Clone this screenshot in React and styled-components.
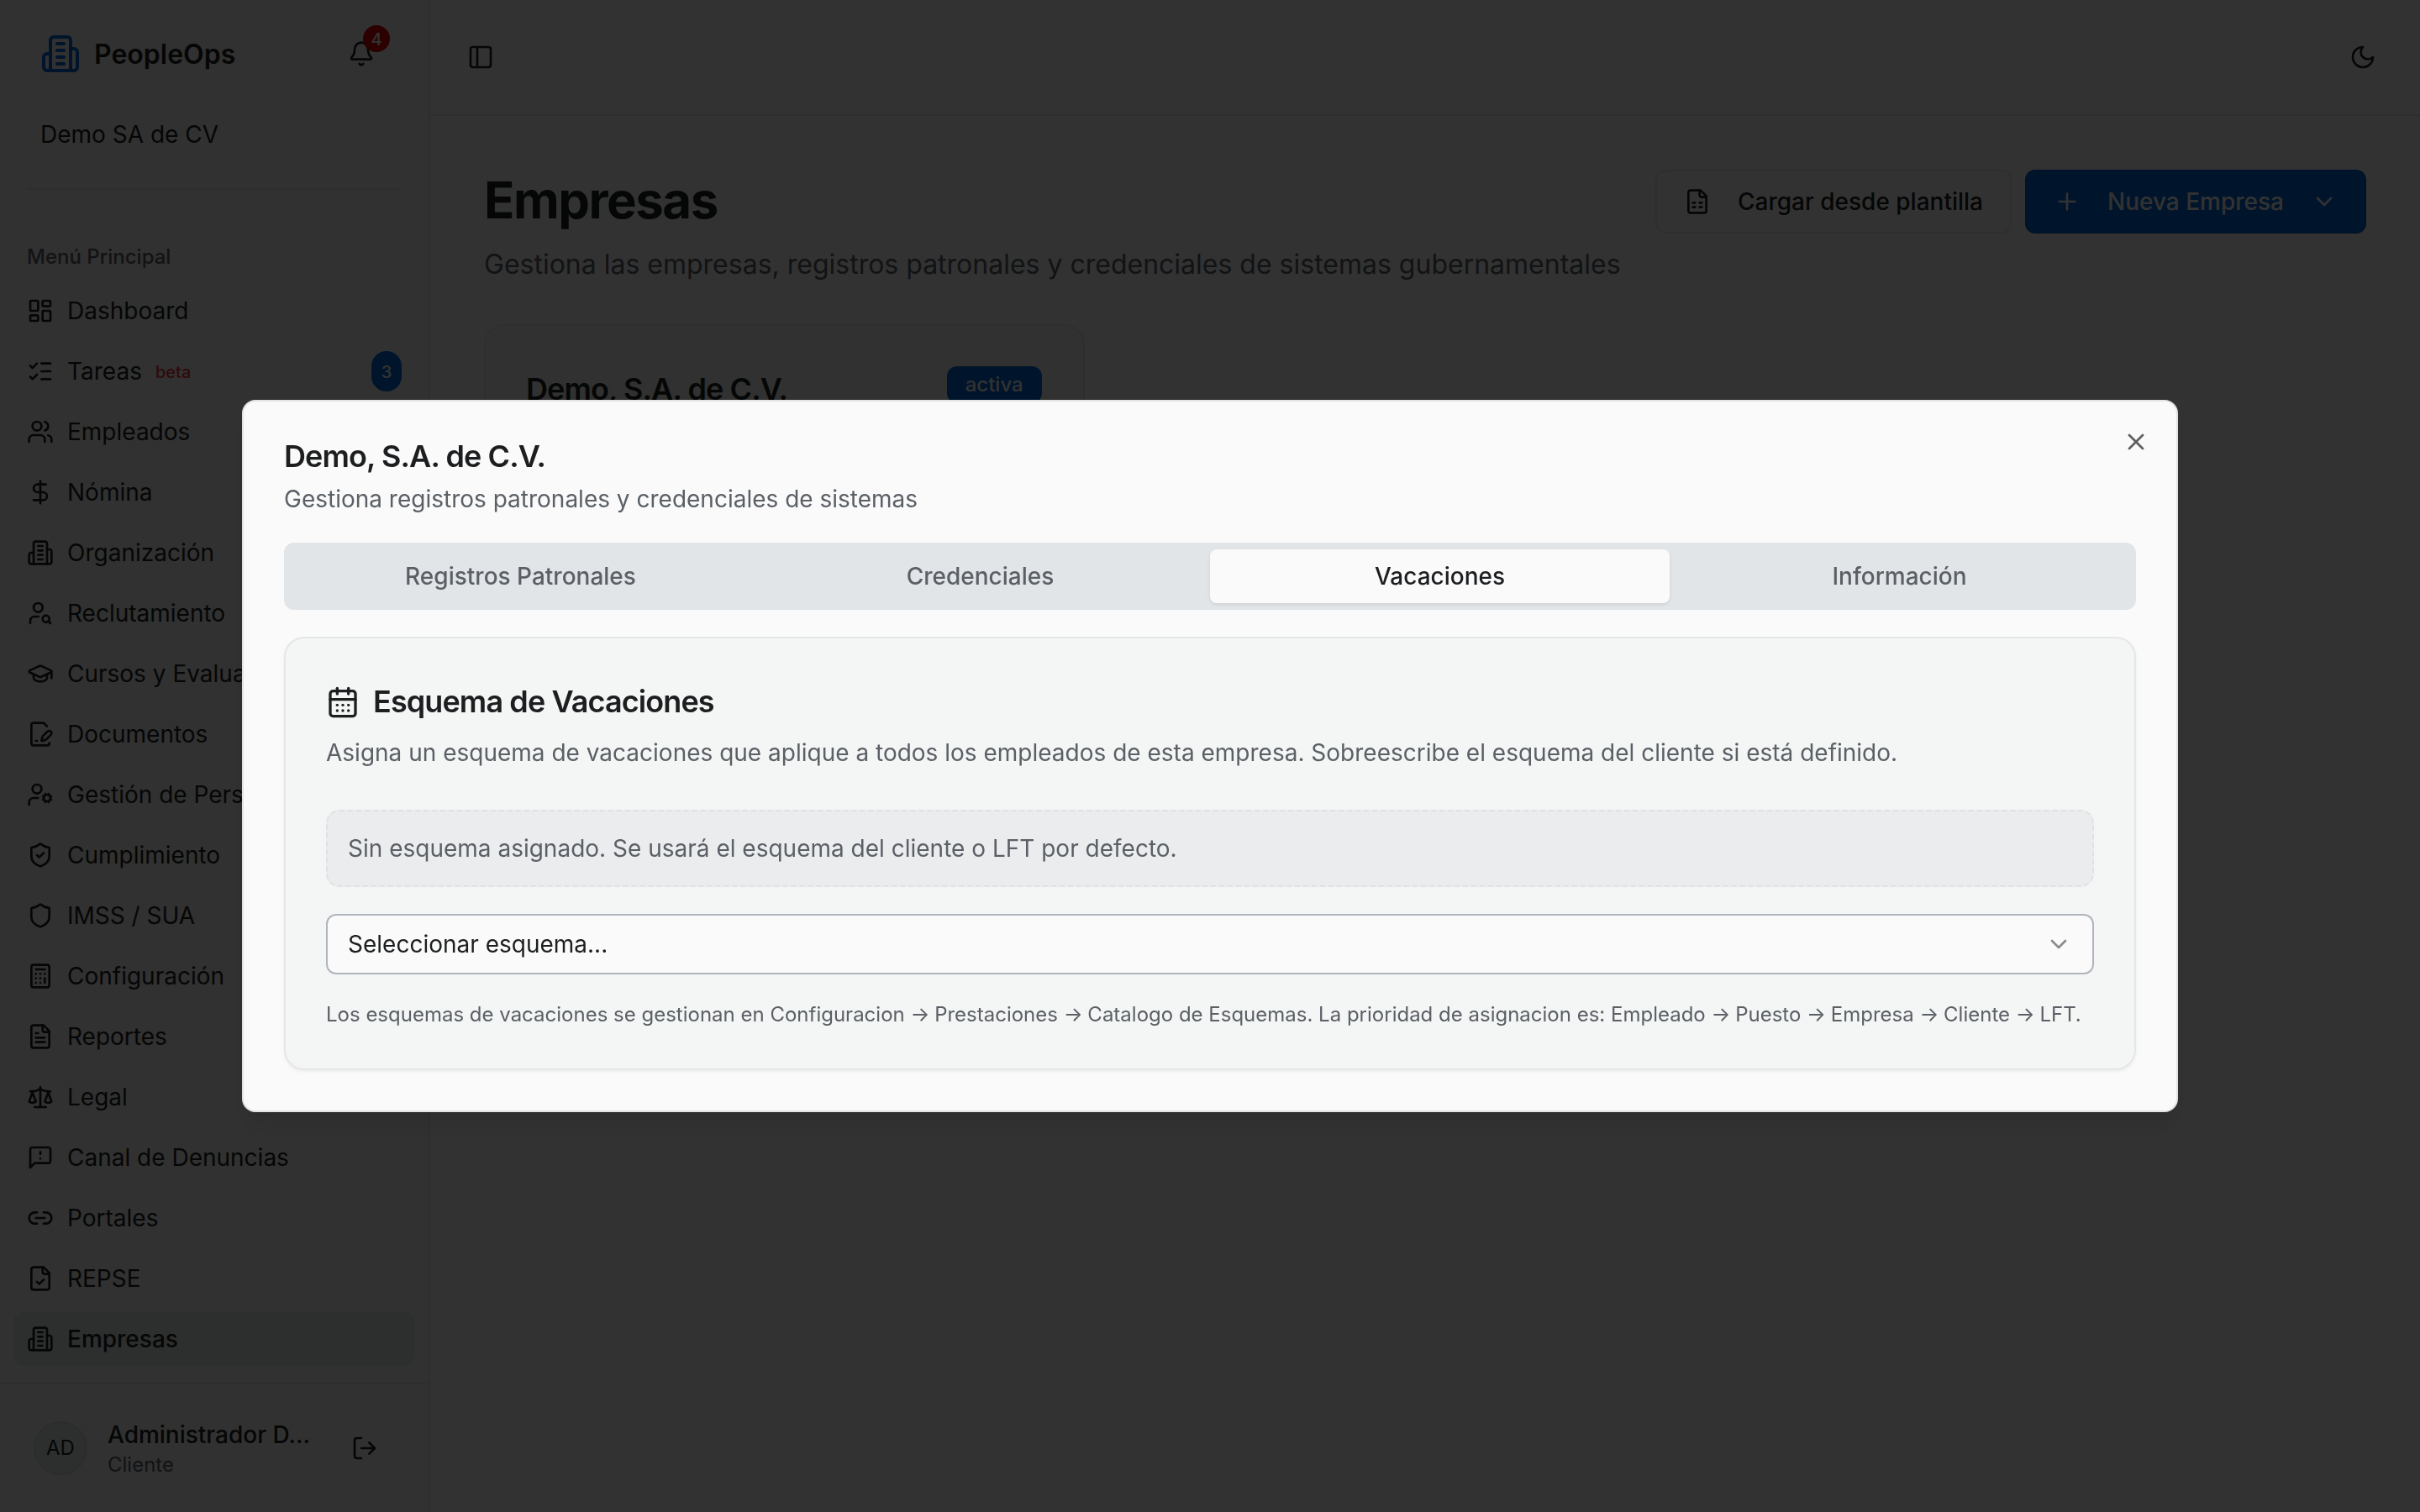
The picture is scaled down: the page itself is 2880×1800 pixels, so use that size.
import styled, { createGlobalStyle, css } from "styled-components";
import {
    ListChecks,
    Users,
    DollarSign,
    UserSearch,
    GraduationCap,
    UserCog,
    ShieldCheck,
    Shield,
    Calculator,
    Scale,
    Link2,
    LogOut,
    PanelLeft,
    CalendarDays,
    LayoutDashboard,
    Bell,
    Plus,
    ChevronDown,
    X,
} from "lucide-react";

function Icone({ size = 32, children }) {
    return (
        <svg width={size} height={size} viewBox="0 0 24 24" fill="none" stroke="currentColor" strokeWidth="2" strokeLinecap="round" strokeLinejoin="round">
            {children}
        </svg>
    );
}

function Edificio({ size }) {
    return (
        <Icone size={size}>
            <path d="M6 22V4a2 2 0 0 1 2-2h8a2 2 0 0 1 2 2v18Z" />
            <path d="M6 12H4a2 2 0 0 0-2 2v6a2 2 0 0 0 2 2h2" />
            <path d="M18 9h2a2 2 0 0 1 2 2v9a2 2 0 0 1-2 2h-2" />
            <path d="M10 6h4M10 10h4M10 14h4M10 18h4" />
        </Icone>
    );
}

function Archivo({ size, d }) {
    return (
        <Icone size={size}>
            <path d="M15 2H6a2 2 0 0 0-2 2v16a2 2 0 0 0 2 2h12a2 2 0 0 0 2-2V7Z" />
            <path d="M14 2v4a2 2 0 0 0 2 2h4" />
            <path d={d} />
        </Icone>
    );
}

const ArchivoTexto = (props) => <Archivo {...props} d="M10 9H8M16 13H8M16 17H8" />;
const ArchivoCheck = (props) => <Archivo {...props} d="m9 15 2 2 4-4" />;
const ArchivoHoja = (props) => <Archivo {...props} d="M8 13h2M14 13h2M8 17h2M14 17h2" />;

function ArchivoFirma({ size }) {
    return (
        <Icone size={size}>
            <path d="m18 5-2.414-2.414A2 2 0 0 0 14.172 2H6a2 2 0 0 0-2 2v16a2 2 0 0 0 2 2h12a2 2 0 0 0 2-2" />
            <path d="M21.378 12.626a1 1 0 0 0-3.004-3.004l-4.01 4.012a2 2 0 0 0-.506.854l-.837 2.87a.5.5 0 0 0 .62.62l2.87-.837a2 2 0 0 0 .854-.506z" />
            <path d="M8 18h1" />
        </Icone>
    );
}

function Denuncia({ size }) {
    return (
        <Icone size={size}>
            <path d="M21 15a2 2 0 0 1-2 2H7l-4 4V5a2 2 0 0 1 2-2h14a2 2 0 0 1 2 2z" />
            <path d="M12 7v2M12 13h.01" />
        </Icone>
    );
}

function Luna({ size }) {
    return (
        <Icone size={size}>
            <path d="M12 3a6 6 0 0 0 9 9 9 9 0 1 1-9-9Z" />
        </Icone>
    );
}

const menu = [
    { nombre: "Dashboard", icono: LayoutDashboard },
    { nombre: "Tareas", icono: ListChecks, beta: true, total: 3 },
    { nombre: "Empleados", icono: Users },
    { nombre: "Nómina", icono: DollarSign },
    { nombre: "Organización", icono: Edificio },
    { nombre: "Reclutamiento", icono: UserSearch },
    { nombre: "Cursos y Evaluaciones", icono: GraduationCap },
    { nombre: "Documentos", icono: ArchivoFirma },
    { nombre: "Gestión de Personal", icono: UserCog },
    { nombre: "Cumplimiento", icono: ShieldCheck },
    { nombre: "IMSS / SUA", icono: Shield },
    { nombre: "Configuración", icono: Calculator },
    { nombre: "Reportes", icono: ArchivoTexto },
    { nombre: "Legal", icono: Scale },
    { nombre: "Canal de Denuncias", icono: Denuncia },
    { nombre: "Portales", icono: Link2 },
    { nombre: "REPSE", icono: ArchivoCheck },
    { nombre: "Empresas", icono: Edificio, activo: true },
];

const tabs = ["Registros Patronales", "Credenciales", "Vacaciones", "Información"];

function Sidebar() {
    return (
        <Lateral>
            <LateralTop>
                <Marca>
                    <LogoBox><Edificio size={48} /></LogoBox>
                    <span>PeopleOps</span>
                </Marca>
                <Campana>
                    <Bell size={32} />
                    <Alerta>4</Alerta>
                </Campana>
            </LateralTop>
            <Cliente>Demo SA de CV</Cliente>
            <Separador />
            <MenuLabel>Menú Principal</MenuLabel>
            <Menu>
                {menu.map(({ nombre, icono: Icon, beta, total, activo }) => (
                    <MenuItem key={nombre} $activo={activo}>
                        <Icon size={32} />
                        <span>{nombre}</span>
                        {beta && <Beta>beta</Beta>}
                        {total && <Total>{total}</Total>}
                    </MenuItem>
                ))}
            </Menu>
            <Usuario>
                <Avatar>AD</Avatar>
                <UsuarioInfo>
                    <UsuarioNombre>Administrador D…</UsuarioNombre>
                    <UsuarioRol>Cliente</UsuarioRol>
                </UsuarioInfo>
                <BotonIcono $size={72}><LogOut size={32} /></BotonIcono>
            </Usuario>
        </Lateral>
    );
}

function Empresas() {
    return (
        <Contenido>
            <Barra>
                <BotonIcono $size={56}><PanelLeft size={32} /></BotonIcono>
                <BotonIcono $size={72}><Luna size={32} /></BotonIcono>
            </Barra>
            <Pagina>
                <Encabezado>
                    <div>
                        <Titulo>Empresas</Titulo>
                        <Subtitulo>Gestiona las empresas, registros patronales y credenciales de sistemas gubernamentales</Subtitulo>
                    </div>
                    <Acciones>
                        <Boton>
                            <ArchivoHoja size={32} />
                            Cargar desde plantilla
                        </Boton>
                        <Boton $primario>
                            <Plus size={32} />
                            Nueva Empresa
                            <ChevronDown size={32} />
                        </Boton>
                    </Acciones>
                </Encabezado>
                <Grid>
                    <Empresa>
                        <EmpresaNombre>Demo, S.A. de C.V.</EmpresaNombre>
                        <Estado>activa</Estado>
                    </Empresa>
                </Grid>
            </Pagina>
        </Contenido>
    );
}

function EmpresaModal() {
    return (
        <Fondo>
            <Modal>
                <Cerrar><X size={32} /></Cerrar>
                <ModalTitulo>Demo, S.A. de C.V.</ModalTitulo>
                <ModalTexto>Gestiona registros patronales y credenciales de sistemas</ModalTexto>
                <Tabs>
                    {tabs.map((tab) => (
                        <Tab key={tab} $activo={tab === "Vacaciones"}>{tab}</Tab>
                    ))}
                </Tabs>
                <Panel>
                    <PanelTitulo>
                        <CalendarDays size={40} />
                        <span>Esquema de Vacaciones</span>
                    </PanelTitulo>
                    <PanelTexto>Asigna un esquema de vacaciones que aplique a todos los empleados de esta empresa. Sobreescribe el esquema del cliente si está definido.</PanelTexto>
                    <Aviso>Sin esquema asignado. Se usará el esquema del cliente o LFT por defecto.</Aviso>
                    <Select>
                        Seleccionar esquema...
                        <ChevronDown size={32} />
                    </Select>
                    <Ayuda>
                        Los esquemas de vacaciones se gestionan en Configuracion <Flecha /> Prestaciones <Flecha /> Catalogo de Esquemas. La prioridad de asignacion es: Empleado <Flecha /> Puesto <Flecha /> Empresa <Flecha /> Cliente <Flecha /> LFT.
                    </Ayuda>
                </Panel>
            </Modal>
        </Fondo>
    );
}

const Flecha = () => <FlechaTexto>→</FlechaTexto>;

export default function App() {
    return (
        <>
            <GlobalStyle />
            <Layout>
                <Sidebar />
                <Empresas />
            </Layout>
            <EmpresaModal />
        </>
    );
}

const GlobalStyle = createGlobalStyle`
    * {
        box-sizing: border-box;
        margin: 0;
        padding: 0;
    }
    body {
        font-family: Inter, "Liberation Sans", sans-serif;
        font-size: 28px;
        line-height: 40px;
        color: #1c1e20;
        background: #fafafa;
        overflow: hidden;
        -webkit-font-smoothing: antialiased;
    }
    svg {
        flex-shrink: 0;
    }
`

const Layout = styled.div`
    display: flex;
    width: 2880px;
    height: 1800px;
`

const Lateral = styled.aside`
    display: flex;
    flex-direction: column;
    width: 512px;
    height: 100%;
    background: #f2f2f2;
    border-right: 2px solid #e2e4e4;
`

const LateralTop = styled.div`
    display: flex;
    align-items: center;
    justify-content: space-between;
    height: 72px;
    margin-top: 28px;
    padding: 0 44px 0 48px;
`

const Marca = styled.div`
    display: flex;
    align-items: center;
    gap: 16px;
    font-size: 32px;
    font-weight: 600;
    span {
        padding-top: 2px;
    }
`

const LogoBox = styled.div`
    display: flex;
    color: #0066d6;
`

const Campana = styled.div`
    position: relative;
    display: flex;
    align-items: center;
    justify-content: center;
    width: 72px;
    height: 72px;
`

const Alerta = styled.span`
    position: absolute;
    top: 2px;
    right: 2px;
    width: 32px;
    height: 32px;
    border-radius: 50%;
    background: #dc0000;
    color: #fafafa;
    font-size: 20px;
    font-weight: 500;
    line-height: 34px;
    text-align: center;
`

const Cliente = styled.div`
    margin: 40px 48px 0;
`

const Separador = styled.div`
    height: 2px;
    margin: 44px 32px 0;
    background: #e4e6e6;
`

const MenuLabel = styled.div`
    margin: 48px 32px 0;
    height: 64px;
    line-height: 64px;
    font-size: 24px;
    font-weight: 500;
    color: #5b6066;
`

const Menu = styled.nav`
    display: flex;
    flex-direction: column;
    gap: 8px;
    padding: 0 16px;
`

const MenuItem = styled.div`
    display: flex;
    align-items: center;
    gap: 16px;
    height: 64px;
    padding: 0 16px;
    border-radius: 12px;
    white-space: nowrap;
    ${({ $activo }) => $activo && css`
        background: #dfe5e3;
        font-weight: 500;
    `}
`

const Beta = styled.span`
    padding-top: 2px;
    font-size: 20px;
    font-weight: 500;
    color: #ea3434;
`

const Total = styled.span`
    width: 36px;
    height: 48px;
    margin-left: auto;
    border-radius: 18px;
    background: #0066d6;
    color: #fafafa;
    font-size: 20px;
    font-weight: 500;
    line-height: 50px;
    text-align: center;
`

const Usuario = styled.div`
    display: flex;
    align-items: center;
    gap: 24px;
    height: 154px;
    margin-top: auto;
    padding: 0 40px;
    border-top: 2px solid #e2e4e4;
`

const Avatar = styled.div`
    display: flex;
    align-items: center;
    justify-content: center;
    width: 64px;
    height: 64px;
    border: 2px solid #d6dbda;
    border-radius: 50%;
    background: #dfe5e3;
    font-size: 24px;
`

const UsuarioInfo = styled.div`
    flex: 1;
    min-width: 0;
`

const UsuarioNombre = styled.div`
    white-space: nowrap;
    font-weight: 500;
`

const UsuarioRol = styled.div`
    font-size: 24px;
    line-height: 32px;
    color: #5b6066;
`

const BotonIcono = styled.button`
    display: flex;
    align-items: center;
    justify-content: center;
    width: ${({ $size }) => $size}px;
    height: ${({ $size }) => $size}px;
    border: none;
    background: none;
    color: inherit;
`

const Contenido = styled.main`
    flex: 1;
`

const Barra = styled.header`
    display: flex;
    align-items: center;
    justify-content: space-between;
    height: 138px;
    padding: 0 32px;
    border-bottom: 2px solid #e2e4e4;
`

const Pagina = styled.div`
    padding: 64px;
`

const Encabezado = styled.div`
    display: flex;
    align-items: flex-start;
    justify-content: space-between;
`

const Titulo = styled.h1`
    font-size: 60px;
    font-weight: 700;
    line-height: 72px;
    letter-spacing: -0.025em;
`

const Subtitulo = styled.p`
    margin-top: 16px;
    font-size: 32px;
    line-height: 50px;
    color: #5b6066;
`

const Acciones = styled.div`
    display: flex;
    gap: 16px;
`

const Boton = styled.button`
    display: flex;
    align-items: center;
    gap: 32px;
    height: 76px;
    padding: 0 32px;
    border: 2px solid ${({ $primario }) => ($primario ? "#005fc8" : "#e5e7e7")};
    border-radius: 12px;
    background: ${({ $primario }) => ($primario ? "#0066d6" : "#fafafa")};
    color: ${({ $primario }) => ($primario ? "#fafafa" : "#1c1e20")};
    font: inherit;
    font-weight: 500;
    white-space: nowrap;
`

const Grid = styled.div`
    display: grid;
    grid-template-columns: repeat(3, 1fr);
    gap: 48px;
    margin-top: 46px;
`

const Empresa = styled.div`
    display: flex;
    align-items: flex-start;
    justify-content: space-between;
    height: 480px;
    padding: 48px;
    border: 2px solid #e5e7e7;
    border-radius: 24px;
    background: #f4f6f5;
`

const EmpresaNombre = styled.h3`
    font-size: 36px;
    font-weight: 600;
    line-height: 54px;
    letter-spacing: -0.025em;
`

const Estado = styled.span`
    margin-right: 1px;
    padding: 6px 22px;
    border-radius: 12px;
    background: #0066d6;
    color: #fafafa;
    font-size: 24px;
    font-weight: 500;
    line-height: 32px;
`

const Fondo = styled.div`
    position: fixed;
    inset: 0;
    display: flex;
    align-items: center;
    justify-content: center;
    background: rgba(0, 0, 0, 0.8);
`

const Modal = styled.div`
    position: relative;
    width: 2304px;
    padding: 48px;
    border: 2px solid #e2e4e4;
    border-radius: 16px;
    background: #fafafa;
    box-shadow: 0 20px 30px -6px rgba(0, 0, 0, 0.1), 0 8px 12px -8px rgba(0, 0, 0, 0.1);
`

const Cerrar = styled.button`
    position: absolute;
    top: 32px;
    right: 32px;
    display: flex;
    border: none;
    background: none;
    color: inherit;
    opacity: 0.7;
`

const ModalTitulo = styled.h2`
    font-size: 36px;
    font-weight: 600;
    line-height: 34px;
    letter-spacing: -0.025em;
`

const ModalTexto = styled.p`
    margin-top: 14px;
    color: #5b6066;
`

const Tabs = styled.div`
    display: grid;
    grid-template-columns: repeat(4, 1fr);
    margin-top: 32px;
    padding: 8px;
    border-radius: 12px;
    background: #e1e5e8;
`

const Tab = styled.div`
    height: 64px;
    border-radius: 8px;
    font-weight: 500;
    line-height: 64px;
    text-align: center;
    color: #5b6066;
    ${({ $activo }) => $activo && css`
        background: #fafafa;
        color: #1c1e20;
        box-shadow: 0 2px 4px rgba(0, 0, 0, 0.08);
    `}
`

const Panel = styled.section`
    margin-top: 32px;
    padding: 48px;
    border: 2px solid #e5e7e7;
    border-radius: 24px;
    background: #f4f6f5;
    box-shadow: 0 2px 4px rgba(0, 0, 0, 0.05);
`

const PanelTitulo = styled.h3`
    display: flex;
    align-items: center;
    gap: 16px;
    font-size: 36px;
    font-weight: 600;
    line-height: 54px;
    letter-spacing: -0.025em;
    span {
        padding-bottom: 2px;
    }
`

const PanelTexto = styled.p`
    margin-top: 12px;
    color: #5b6066;
`

const Aviso = styled.div`
    margin-top: 48px;
    padding: 24px;
    border: 2px dashed #dfe1e3;
    border-radius: 16px;
    background: #ebecee;
    color: #5b6066;
`

const Select = styled.div`
    display: flex;
    align-items: center;
    justify-content: space-between;
    height: 72px;
    margin-top: 32px;
    padding: 0 24px;
    border: 2px solid #b0b5bc;
    border-radius: 12px;
    background: #fafafa;
    svg {
        opacity: 0.5;
    }
`

const Ayuda = styled.p`
    margin-top: 32px;
    font-size: 24px;
    line-height: 32px;
    color: #5b6066;
`

const FlechaTexto = styled.span`
    letter-spacing: -1px;
`
